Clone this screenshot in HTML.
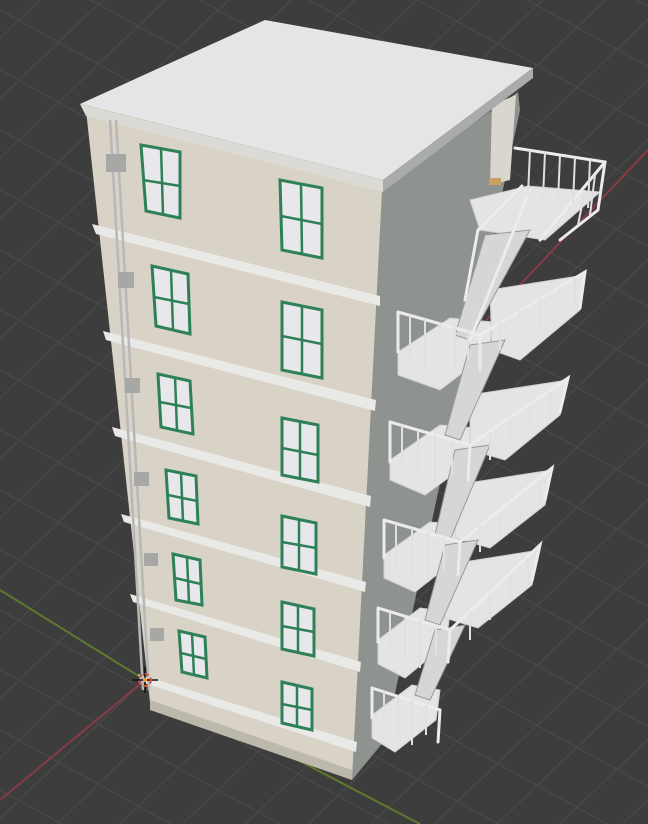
<!DOCTYPE html>
<html><head><meta charset="utf-8"><style>html,body{margin:0;padding:0;background:#3d3d3d;width:648px;height:824px;overflow:hidden;}svg{display:block}</style></head>
<body>
<svg width="648" height="824" viewBox="0 0 648 824" xmlns="http://www.w3.org/2000/svg">
<rect width="648" height="824" fill="#3d3d3d"/>
<g stroke="#4a4a4a" stroke-width="1.2">
<path d="M-400,300 L700,-750 M-400,360 L700,-690 M-400,420 L700,-630 M-400,480 L700,-570 M-400,540 L700,-510 M-400,600 L700,-450 M-400,660 L700,-390 M-400,720 L700,-330 M-400,780 L700,-270 M-400,840 L700,-210 M-400,900 L700,-150 M-400,960 L700,-90 M-400,1020 L700,-30 M-400,1080 L700,30 M-400,1140 L700,90 M-400,1200 L700,150 M-400,1260 L700,210 M-400,1320 L700,270 M-400,1380 L700,330 M-400,1440 L700,390 M-400,1500 L700,450 M-400,1560 L700,510 M-400,1620 L700,570 M-400,1680 L700,630 M-400,1740 L700,690 M-400,1800 L700,750 M-400,1860 L700,810"/>
<path d="M0,-410 L700,-25 M0,-350 L700,35 M0,-290 L700,95 M0,-230 L700,155 M0,-170 L700,215 M0,-110 L700,275 M0,-50 L700,335 M0,10 L700,395 M0,70 L700,455 M0,130 L700,515 M0,190 L700,575 M0,250 L700,635 M0,310 L700,695 M0,370 L700,755 M0,430 L700,815 M0,490 L700,875 M0,550 L700,935 M0,610 L700,995 M0,670 L700,1055 M0,730 L700,1115 M0,790 L700,1175"/>
</g>
<path d="M0,800 L145,680 L648,150" stroke="#8a3a45" stroke-width="2" fill="none"/>
<path d="M0,590 L145,680 L420,824" stroke="#5e7a2e" stroke-width="2" fill="none"/>

<polygon points="380,188 518,92 520,110 385,740 352,780" fill="#8f9390"/>
<polygon points="492,105 516,95 510,180 490,185" fill="#d8d6cf"/>
<rect x="489" y="178" width="12" height="7" fill="#c8a060"/>
<polygon points="86,110 382,190 352,780 150,702" fill="#d8d3c6"/>
<polygon points="80,104 265,20 533,68 383,180" fill="#e3e5e7"/>
<polygon points="80,104 383,180 383,192 86,116" fill="#dcdad4"/>
<polygon points="383,180 533,68 533,78 383,192" fill="#a9acab"/>

<g fill="#e9e9e7">
<polygon points="92,224 380,296 380,306 96,234"/>
<polygon points="103,331 376,400 375,411 106,340"/>
<polygon points="112,427 371,496 370,507 115,436"/>
<polygon points="121,514 366,582 365,592 124,522"/>
<polygon points="130,594 361,662 360,672 133,602"/>
<polygon points="138,674 357,742 356,752 141,682"/>
</g>
<polygon points="150,700 352,770 352,780 150,710" fill="#bdb8ac"/>

<g stroke="#b8b8b8" stroke-width="2.5" fill="none">
<path d="M110,120 L143,690 M116,120 L149,690"/>
</g>
<g fill="#a7a7a5">
<rect x="106" y="154" width="20" height="18"/>
<rect x="118" y="272" width="16" height="16"/>
<rect x="125" y="378" width="15" height="15"/>
<rect x="134" y="472" width="15" height="14"/>
<rect x="144" y="553" width="14" height="13"/>
<rect x="150" y="628" width="14" height="13"/>
</g>

<g fill="#e8e8ec" stroke="#2e8058" stroke-width="3">
<polygon points="141,145 180,152 180,218 146,211"/>
<polygon points="280,180 322,188 322,258 282,250"/>
<polygon points="152,266 188,274 190,334 156,326"/>
<polygon points="282,302 322,310 322,378 282,370"/>
<polygon points="158,374 190,381 193,434 161,427"/>
<polygon points="282,418 318,425 318,482 282,475"/>
<polygon points="166,470 196,476 198,524 169,518"/>
<polygon points="282,516 316,523 316,574 282,567"/>
<polygon points="173,554 200,560 202,605 176,600"/>
<polygon points="282,602 314,609 314,656 282,649"/>
<polygon points="179,631 205,637 207,678 182,672"/>
<polygon points="282,682 312,689 312,730 282,723"/>
</g>
<g stroke="#2e8058" stroke-width="2.5">
<path d="M161,148 L163,214 M143,180 L180,186 M301,184 L302,254 M281,216 L322,224 M171,270 L173,330 M154,297 L189,304 M302,306 L302,374 M282,336 L322,344 M175,377 L177,430 M160,402 L191,408 M300,421 L300,478 M282,448 L318,455 M181,473 L183,521 M168,495 L197,501 M299,519 L299,570 M282,542 L316,548 M187,557 L189,602 M175,578 L201,584 M298,605 L298,652 M282,626 L314,632 M192,634 L194,675 M181,653 L206,659 M297,685 L297,726 M282,704 L312,710"/>
</g>

<g fill="#e4e4e4" stroke="#cfcfcf" stroke-width="1">
<polygon points="470,200 528,186 600,192 545,240 480,230"/>
<polygon points="398,352 450,318 492,322 490,352 440,390 398,375"/>
<polygon points="390,460 440,425 475,428 470,462 425,495 390,480"/>
<polygon points="384,555 430,522 462,525 458,558 415,592 384,578"/>
<polygon points="378,640 420,608 450,612 446,644 405,678 378,664"/>
<polygon points="372,715 412,685 440,690 436,720 395,752 372,738"/>
<polygon points="490,290 585,275 580,310 520,360 492,350"/>
<polygon points="470,395 568,380 560,415 505,460 470,450"/>
<polygon points="455,485 552,470 545,505 490,548 455,538"/>
<polygon points="445,565 540,550 532,585 478,628 445,618"/>
</g>
<g fill="#d6d6d6" stroke="#9a9a9a" stroke-width="1">
<polygon points="485,235 530,230 470,340 455,335"/>
<polygon points="470,345 505,340 460,440 445,435"/>
<polygon points="455,450 490,445 450,540 435,535"/>
<polygon points="445,545 478,540 440,625 425,620"/>
<polygon points="435,630 465,625 430,700 415,695"/>
</g>
<g stroke="#ececec" stroke-width="3" fill="none" stroke-linecap="round">
<path d="M515,148 L605,162 L598,210 L560,240 M605,162 L540,240"/>
<path d="M522,186 L478,230 L465,300 M530,190 L470,340"/>
<path d="M398,312 L480,335 L480,370 M398,312 L398,352 M480,335 L585,272 L580,308"/>
<path d="M390,422 L470,445 L468,480 M390,422 L390,462 M470,445 L568,378 L560,412"/>
<path d="M384,520 L460,542 L458,575 M384,520 L384,558 M460,542 L552,468 L545,500"/>
<path d="M378,608 L450,630 L448,662 M378,608 L378,642 M450,630 L540,545 L532,580"/>
<path d="M372,688 L440,710 L438,742 M372,688 L372,718"/>
</g>
<g stroke="#e0e0e0" stroke-width="2">
<path d="M530,150 L528,195 M545,152 L543,198 M560,155 L558,200 M575,157 L573,203 M590,160 L588,208 M595,175 L590,215 M585,190 L578,225"/>
<path d="M410,315 L410,360 M425,319 L425,368 M440,323 L440,375 M455,327 L455,370 M468,331 L468,360 M500,322 L500,350 M520,310 L520,340 M540,298 L540,325 M560,287 L560,315 M575,278 L575,305"/>
<path d="M402,425 L402,468 M418,430 L418,478 M435,435 L435,485 M452,440 L452,475 M490,432 L490,460 M510,420 L510,445 M530,405 L530,430 M550,392 L550,418"/>
<path d="M396,523 L396,565 M412,528 L412,575 M428,532 L428,582 M444,537 L444,570 M480,525 L480,552 M500,512 L500,538 M520,496 L520,522 M540,480 L540,505"/>
<path d="M390,611 L390,650 M405,616 L405,660 M420,620 L420,668 M436,625 L436,655 M470,612 L470,640 M490,595 L490,620 M510,575 L510,600 M528,558 L528,585"/>
<path d="M384,691 L384,728 M398,695 L398,738 M412,700 L412,745 M426,705 L426,735"/>
</g>
<g stroke="#111" stroke-width="1.5"><path d="M132,680 L158,680 M145,667 L145,693"/></g>
<circle cx="145" cy="680" r="6" fill="none" stroke="#e05030" stroke-width="2" stroke-dasharray="4 3"/>
<circle cx="145" cy="680" r="2" fill="#e8a030"/>
</svg>
</body></html>
